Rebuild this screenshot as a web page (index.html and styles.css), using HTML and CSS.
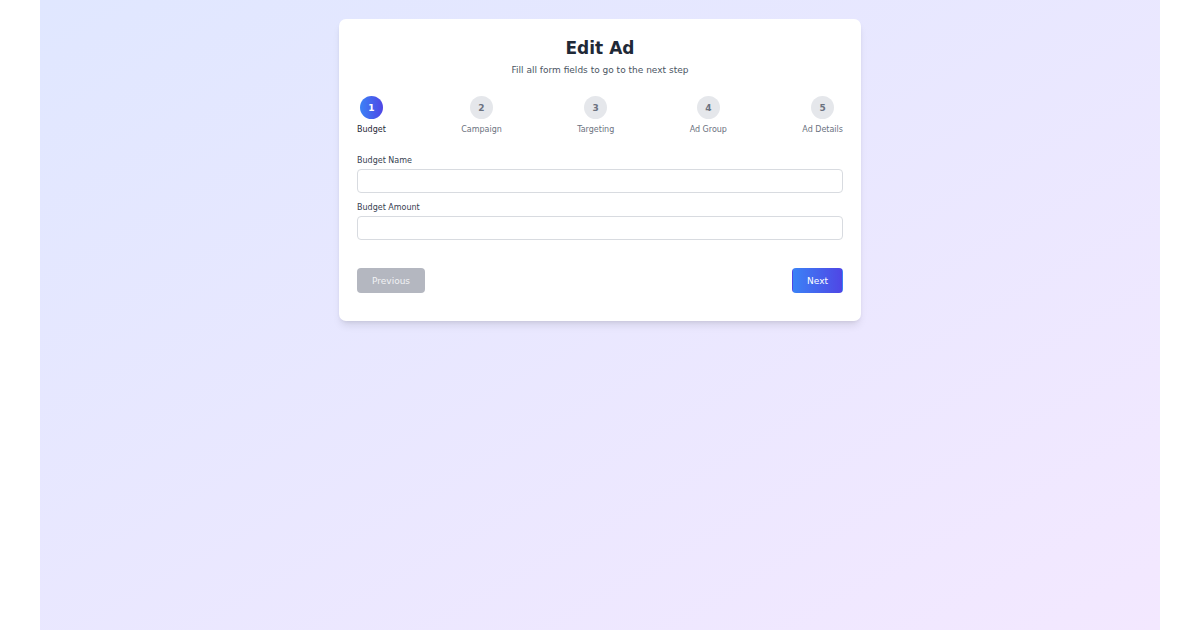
FILE: index.html
```html
<!DOCTYPE html>
<html lang="en">
<head>
  <meta charset="UTF-8">
  <meta name="viewport" content="width=device-width, initial-scale=1.0">
  <title>Edit Ad</title>
  <link rel="stylesheet" href="styles.css">
</head>
<body>
<main class="page">
  <div class="card">
    <header class="card-header">
      <h1>Edit Ad</h1>
      <p>Fill all form fields to go to the next step</p>
    </header>

    <ol class="steps">
      <li class="step active"><span class="step-number">1</span><span class="step-label">Budget</span></li>
      <li class="step"><span class="step-number">2</span><span class="step-label">Campaign</span></li>
      <li class="step"><span class="step-number">3</span><span class="step-label">Targeting</span></li>
      <li class="step"><span class="step-number">4</span><span class="step-label">Ad Group</span></li>
      <li class="step"><span class="step-number">5</span><span class="step-label">Ad Details</span></li>
    </ol>

    <form class="ad-form">
      <div class="form-group">
        <label for="budget-name">Budget Name</label>
        <input type="text" id="budget-name" name="budgetName">
      </div>
      <div class="form-group">
        <label for="budget-amount">Budget Amount</label>
        <input type="text" inputmode="decimal" id="budget-amount" name="budgetAmount">
      </div>

      <div class="form-actions">
        <button type="button" class="btn btn-previous" disabled>Previous</button>
        <button type="button" class="btn btn-next">Next</button>
      </div>
    </form>
  </div>
</main>
</body>
</html>
```

FILE: styles.css
```css
:root {
  --text-dark: #1f2937;
  --text-label: #374151;
  --text-sub: #4b5563;
  --text-muted: #6b7280;
  --border-color: #d8dbe0;
  --accent: linear-gradient(to right, #3b82f6, #4f46e5);
}

* {
  box-sizing: border-box;
}

body {
  margin: 0;
  background-color: #ffffff;
  color: var(--text-dark);
  font-family: "DejaVu Sans", sans-serif;
  font-size: 9px;
  line-height: 14px;
}

.page {
  max-width: 1120px;
  min-height: 100vh;
  margin: 0 auto;
  padding: 19px;
  background: linear-gradient(to bottom right, #e0e7ff, #f3e8ff);
}

.card {
  max-width: 522px;
  margin: 0 auto;
  padding: 19px 18px 28px;
  background-color: #ffffff;
  border-radius: 7px;
  box-shadow: 0 6px 9px -2px rgba(0, 0, 0, 0.1), 0 2px 4px -2px rgba(0, 0, 0, 0.1);
}

.card-header {
  margin-bottom: 19px;
  text-align: center;
}

h1 {
  margin: 0 0 5px;
  font-size: 17px;
  line-height: 20px;
}

.card-header p {
  margin: 0;
  color: var(--text-sub);
}

.steps {
  display: flex;
  justify-content: space-between;
  margin: 0 0 19px;
  padding: 0;
  list-style: none;
}

.step {
  display: flex;
  flex-direction: column;
  align-items: center;
  gap: 5px;
  color: var(--text-muted);
}

.step-number {
  display: flex;
  align-items: center;
  justify-content: center;
  width: 23px;
  height: 23px;
  border-radius: 50%;
  background-color: #e5e7eb;
  font-weight: bold;
}

.step-label {
  font-size: 8px;
  line-height: 12px;
}

.step.active {
  color: var(--text-dark);
}

.step.active .step-number {
  background: var(--accent);
  color: #ffffff;
}

.form-group {
  margin-bottom: 9px;
}

label {
  display: block;
  margin-bottom: 2px;
  color: var(--text-label);
  font-size: 8px;
  line-height: 12px;
}

input {
  display: block;
  width: 100%;
  height: 24px;
  padding: 4px 7px;
  border: 1px solid var(--border-color);
  border-radius: 4px;
  background-color: #ffffff;
  color: var(--text-dark);
  font: inherit;
}

.form-actions {
  display: flex;
  justify-content: space-between;
  margin-top: 28px;
}

.btn {
  height: 25px;
  padding: 0 14px;
  border: 1px solid transparent;
  border-radius: 4px;
  color: #ffffff;
  font: inherit;
  cursor: pointer;
}

.btn-next {
  background: var(--accent);
}

.btn-previous {
  background-color: #b4b7c0;
  color: #f1f2f4;
  cursor: not-allowed;
}
```
